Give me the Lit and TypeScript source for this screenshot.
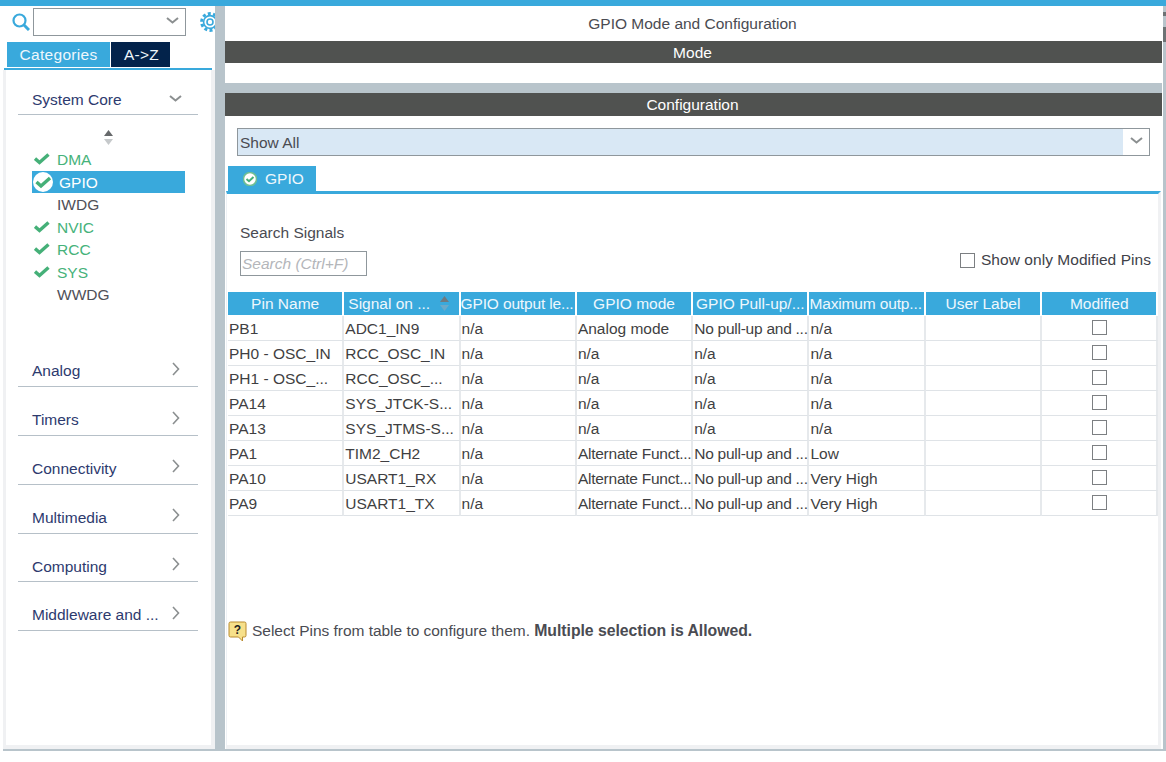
import { LitElement, css, html, svg } from "lit";
import { customElement, state } from "lit/decorators.js";

type Peripheral = { name: string; ok: boolean };
type PinRow = [string, string, string, string, string, string];

const PERIPHERALS: Peripheral[] = [
  { name: "DMA", ok: true },
  { name: "GPIO", ok: true },
  { name: "IWDG", ok: false },
  { name: "NVIC", ok: true },
  { name: "RCC", ok: true },
  { name: "SYS", ok: true },
  { name: "WWDG", ok: false },
];

const CATEGORIES = ["Analog", "Timers", "Connectivity", "Multimedia", "Computing", "Middleware and ..."];

const COLUMNS = [
  "Pin Name",
  "Signal on ...",
  "GPIO output le...",
  "GPIO mode",
  "GPIO Pull-up/...",
  "Maximum outp...",
  "User Label",
  "Modified",
];

const PULL = "No pull-up and ...";
const ALT = "Alternate Funct...";

const PINS: PinRow[] = [
  ["PB1", "ADC1_IN9", "n/a", "Analog mode", PULL, "n/a"],
  ["PH0 - OSC_IN", "RCC_OSC_IN", "n/a", "n/a", "n/a", "n/a"],
  ["PH1 - OSC_...", "RCC_OSC_...", "n/a", "n/a", "n/a", "n/a"],
  ["PA14", "SYS_JTCK-S...", "n/a", "n/a", "n/a", "n/a"],
  ["PA13", "SYS_JTMS-S...", "n/a", "n/a", "n/a", "n/a"],
  ["PA1", "TIM2_CH2", "n/a", ALT, PULL, "Low"],
  ["PA10", "USART1_RX", "n/a", ALT, PULL, "Very High"],
  ["PA9", "USART1_TX", "n/a", ALT, PULL, "Very High"],
];

const chevronDown = html`<svg class="chev-down" width="13" height="7" viewBox="0 0 13 7">
  <path d="M1 1l5.500 4.500L12 1" fill="none" stroke="#8b8f90" stroke-width="2" />
</svg>`;

const chevronRight = html`<svg class="chev-right" width="8" height="14" viewBox="0 0 8 14">
  <path d="M1 1l5.500 6L1 13" fill="none" stroke="#8b8f90" stroke-width="1.600" />
</svg>`;

const check = svg`<path d="M1 5.500l4.500 4L14.500 1.500" fill="none" stroke="#45b078" stroke-width="3.400" />`;

const sortIcon = (top: string, bottom: string) => html`<svg width="11" height="15" viewBox="0 0 11 15">
  <path d="M5.500 0L10 6H1z" fill=${top} />
  <path d="M5.500 15L10 9H1z" fill=${bottom} />
</svg>`;

@customElement("app-root")
export class AppRoot extends LitElement {
  static styles = css`
    :host {
      display: block;
      width: 1166px;
      height: 762px;
      overflow: hidden;
      background: #fff;
      font-family: "Liberation Sans", Arial, sans-serif;
      font-size: 15.5px;
      color: #4a4b52;
    }
    .topbar {
      height: 6px;
      background: #39a9dc;
    }
    .frame {
      position: relative;
      display: flex;
      height: 743px;
      margin-left: 3px;
      border-bottom: 2px solid #b8c4cb;
    }

    /* left panel */
    .left {
      width: 212px;
      flex: none;
      display: flex;
      flex-direction: column;
      overflow: hidden;
    }
    .toolbar {
      display: flex;
      align-items: center;
      height: 36px;
      box-sizing: border-box;
      padding: 0 0 4px 9px;
    }
    .toolbar > * {
      flex: none;
    }
    .combo {
      width: 153px;
      height: 28px;
      box-sizing: border-box;
      margin-left: 3px;
      border: 1.500px solid #8f979c;
      display: flex;
      align-items: center;
      justify-content: flex-end;
      padding-right: 6px;
    }
    .gear {
      margin-left: 14px;
    }
    .tabs {
      display: flex;
      height: 25px;
      padding-left: 4px;
      gap: 1px;
    }
    .tab {
      display: flex;
      align-items: center;
      justify-content: center;
      color: #eef7fc;
      letter-spacing: 0.3px;
    }
    .tab.categories {
      width: 103px;
      background: #39a9dc;
    }
    .tab.az {
      width: 59px;
      box-sizing: border-box;
      padding-left: 2px;
      background: #03234b;
    }
    .tabline {
      height: 2px;
      margin: 1px 3px 0 1px;
      background: #39a9dc;
    }
    .tree {
      flex: 1;
      box-sizing: border-box;
      border-left: 3px solid #f0f1f3;
      border-right: 4px solid #f0f1f3;
      border-bottom: 4px solid #f0f1f3;
      padding: 15px 13px 0 12px;
      color: #2d3a6e;
    }
    .cat {
      display: flex;
      align-items: center;
      justify-content: space-between;
      box-sizing: border-box;
      height: 30.800px;
      padding: 0 18px 0 14px;
      border-bottom: 1px solid #b6c0c8;
    }
    .cat + .cat {
      margin-top: 18px;
    }
    .cat.open {
      height: 30px;
      padding-right: 16px;
    }
    .chev-down {
      margin-top: -3px;
    }
    .chev-right {
      margin-top: -5px;
    }
    .sort {
      display: flex;
      justify-content: center;
      width: 180px;
      padding-top: 15px;
      height: 18px;
    }
    .items {
      margin: 0 0 51px 14px;
      width: 153px;
    }
    .item {
      display: flex;
      align-items: center;
      box-sizing: border-box;
      height: 22.500px;
      padding: 2px 0 0 25px;
      position: relative;
      color: #4f5058;
    }
    .item.ok {
      color: #46b27a;
    }
    .item.sel {
      background: #39a9dc;
      color: #fff;
      padding-left: 27px;
    }
    .item svg {
      position: absolute;
      left: 2px;
      top: 5px;
    }
    .item.sel svg {
      left: 1px;
      top: 1px;
    }

    .sash {
      width: 10px;
      flex: none;
      background: #b8c4cb;
    }

    /* right panel */
    .main {
      width: 937px;
      flex: none;
      display: flex;
      flex-direction: column;
    }
    .title {
      height: 35px;
      display: flex;
      align-items: center;
      justify-content: center;
      box-sizing: border-box;
      padding-right: 2px;
    }
    .bar {
      background: #505250;
      color: #fff;
      display: flex;
      align-items: center;
      justify-content: center;
      box-sizing: border-box;
      height: 22px;
      padding: 1px 2px 0 0;
    }
    .bar.config {
      height: 23px;
      padding-top: 0;
    }
    .gap {
      height: 20px;
    }
    .split {
      height: 10px;
      background: #b8c4cb;
    }
    .select {
      display: flex;
      height: 28px;
      box-sizing: border-box;
      margin: 12px 12px 10px;
      border: 1.500px solid #8f979c;
    }
    .select .value {
      flex: 1;
      display: flex;
      align-items: center;
      padding: 2px 0 0 2px;
      background: #d9e8f5;
    }
    .select .arrow {
      width: 26px;
      display: flex;
      align-items: center;
      justify-content: center;
    }
    .pin-tab {
      margin-left: 3px;
      width: 88px;
      height: 25px;
      box-sizing: border-box;
      padding-left: 15px;
      gap: 8px;
      display: flex;
      align-items: center;
      background: #39a9dc;
      color: #eef7fc;
    }
    .content {
      flex: 1;
      display: flex;
      flex-direction: column;
      margin: 0 1px;
      border-top: 3px solid #39a9dc;
      border-right: 3px solid #f0f1f3;
      border-bottom: 4px solid #f0f1f3;
      border-left: 1px solid #edf1f5;
    }
    .filters {
      display: flex;
      justify-content: space-between;
      align-items: flex-end;
      height: 82px;
      box-sizing: border-box;
      padding: 30px 7px 0 13px;
    }
    .search-label {
      line-height: 18px;
      margin-bottom: 9px;
    }
    .search {
      width: 127px;
      height: 25px;
      box-sizing: border-box;
      border: 1.500px solid #8f979c;
      color: #b4b6ba;
      font-style: italic;
      display: flex;
      align-items: center;
      padding-left: 1px;
    }
    .only {
      display: flex;
      align-items: center;
      gap: 6px;
      height: 16px;
      margin-bottom: 8px;
      color: #404148;
      letter-spacing: 0.05px;
    }
    .box {
      width: 15px;
      height: 15px;
      box-sizing: border-box;
      border: 1.500px solid #7c7f82;
      background: #fff;
      display: block;
    }
    .table {
      display: grid;
      grid-template-columns: repeat(8, 116.300px);
      margin: 16px 0 0 1px;
    }
    .th {
      height: 23px;
      margin-bottom: 1px;
      box-sizing: border-box;
      background: #39a9dc;
      border-right: 2px solid #fff;
      color: #eef7fc;
      display: flex;
      align-items: center;
      justify-content: center;
      white-space: nowrap;
    }
    .th.trunc {
      justify-content: flex-start;
      padding-left: 0;
      letter-spacing: -0.15px;
    }
    .th.sorted {
      justify-content: space-between;
      padding: 0 9px 0 4px;
    }
    .td {
      height: 25px;
      box-sizing: border-box;
      border-right: 2px solid #e6e9ec;
      border-bottom: 1px solid #dfe3e7;
      padding: 2px 0 0 1px;
      display: flex;
      align-items: center;
      white-space: nowrap;
      color: #3f3f42;
    }
    .td.tight {
      letter-spacing: -0.25px;
    }
    .td.center {
      justify-content: center;
      padding: 0 0 2px;
    }
    .hint {
      display: flex;
      align-items: center;
      gap: 5px;
      margin: 104px 0 0 1px;
      height: 22px;
    }
    .hint span {
      letter-spacing: -0.03px;
    }
    .hint b {
      font-weight: 700;
      font-size: 15.800px;
    }
    .scroll {
      position: absolute;
      top: 0;
      right: 0;
      bottom: 0;
      width: 3px;
      background: #b8c4cb;
    }
    .scroll i {
      position: absolute;
      left: 0;
      width: 3px;
      background: #6d7274;
    }
    .scroll .a {
      top: 6px;
      height: 4px;
    }
    .scroll .b {
      top: 21px;
      height: 15px;
    }
  `;

  @state() private selected = "GPIO";

  private renderItem(p: Peripheral) {
    const sel = p.name === this.selected;
    return html`<div
      class="item ${p.ok ? "ok" : ""} ${sel ? "sel" : ""}"
      @click=${() => (this.selected = p.name)}
    >
      ${sel
        ? html`<svg width="20" height="20" viewBox="0 0 20 20">
            <circle cx="10" cy="10" r="10" fill="#fff" />
            <g transform="translate(2.500 4.500)">${check}</g>
          </svg>`
        : p.ok
          ? html`<svg width="16" height="12" viewBox="0 0 16 12">${check}</svg>`
          : ""}
      ${p.name}
    </div>`;
  }

  private renderHeader(label: string, i: number) {
    if (i === 1) {
      return html`<div class="th sorted"><span>${label}</span>${sortIcon("#6f7a80", "#6aa9c9")}</div>`;
    }
    const truncated = i === 2 || i === 5;
    return html`<div class="th ${truncated ? "trunc" : ""}">${label}</div>`;
  }

  override render() {
    return html`
      <div class="topbar"></div>
      <div class="frame">
        <div class="left">
          <div class="toolbar">
            <svg width="18" height="18" viewBox="0 0 18 18">
              <circle cx="7.500" cy="7.500" r="6" fill="none" stroke="#39a9dc" stroke-width="2.200" />
              <path d="M12 12l5 5" stroke="#39a9dc" stroke-width="3" />
            </svg>
            <div class="combo">${chevronDown}</div>
            <svg class="gear" width="20" height="20" viewBox="0 0 20 20">
              <circle cx="10" cy="10" r="8.400" fill="none" stroke="#39a9dc" stroke-width="3" stroke-dasharray="3 2.300" />
              <circle cx="10" cy="10" r="6.400" fill="none" stroke="#39a9dc" stroke-width="1.600" />
              <circle cx="10" cy="10" r="3" fill="none" stroke="#39a9dc" stroke-width="1.600" />
            </svg>
          </div>
          <div class="tabs">
            <div class="tab categories">Categories</div>
            <div class="tab az">A-&gt;Z</div>
          </div>
          <div class="tabline"></div>
          <div class="tree">
            <div class="cat open"><span>System Core</span>${chevronDown}</div>
            <div class="sort">${sortIcon("#66696b", "#c6c9cb")}</div>
            <div class="items">${PERIPHERALS.map((p) => this.renderItem(p))}</div>
            ${CATEGORIES.map((c) => html`<div class="cat"><span>${c}</span>${chevronRight}</div>`)}
          </div>
        </div>
        <div class="sash"></div>
        <div class="main">
          <div class="title">GPIO Mode and Configuration</div>
          <div class="bar">Mode</div>
          <div class="gap"></div>
          <div class="split"></div>
          <div class="bar config">Configuration</div>
          <div class="select">
            <div class="value">Show All</div>
            <div class="arrow">${chevronDown}</div>
          </div>
          <div class="pin-tab">
            <svg width="14" height="14" viewBox="0 0 14 14">
              <circle cx="7" cy="7" r="6.500" fill="#fff" stroke="#6fbf93" stroke-width="1.500" />
              <path d="M3.500 7l2.500 2.200L10.500 5" fill="none" stroke="#45b078" stroke-width="2" />
            </svg>
            GPIO
          </div>
          <div class="content">
            <div class="filters">
              <div>
                <div class="search-label">Search Signals</div>
                <div class="search">Search (Ctrl+F)</div>
              </div>
              <label class="only"><span class="box"></span>Show only Modified Pins</label>
            </div>
            <div class="table">
              ${COLUMNS.map((c, i) => this.renderHeader(c, i))}
              ${PINS.map(
                (row) => html`
                  ${row.map((cell) => html`<div class="td ${cell === PULL || cell === ALT ? "tight" : ""}">${cell}</div>`)}
                  <div class="td"></div>
                  <div class="td center"><span class="box"></span></div>
                `,
              )}
            </div>
            <div class="hint">
              <svg width="19" height="21" viewBox="0 0 19 21">
                <path d="M2.500 1h14a1.500 1.500 0 0 1 1.500 1.500v12a1.500 1.500 0 0 1-1.500 1.500h-2v4l-4-4h-8a1.500 1.500 0 0 1-1.500-1.500v-12a1.500 1.500 0 0 1 1.500-1.500z" fill="#f7e08a" stroke="#b98a2e" />
                <text x="9.500" y="13" text-anchor="middle" font-size="12" font-weight="700" fill="#222">?</text>
              </svg>
              <span>Select Pins from table to configure them. <b>Multiple selection is Allowed.</b></span>
            </div>
          </div>
        </div>
        <div class="scroll"><i class="a"></i><i class="b"></i></div>
      </div>
    `;
  }
}
